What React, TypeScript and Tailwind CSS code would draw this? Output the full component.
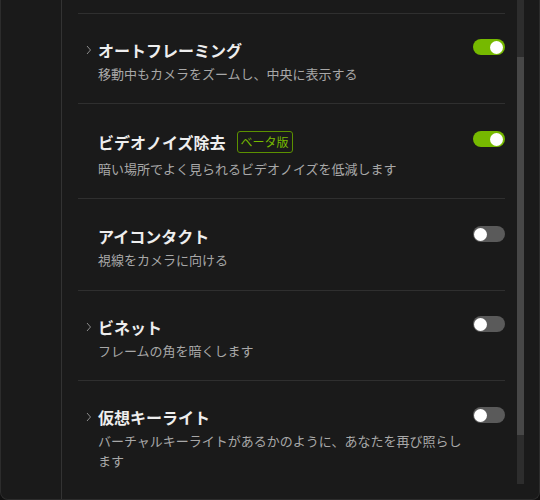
import React from "react";

interface Feature {
  id: string;
  title: string;
  description: string;
  enabled: boolean;
  expandable: boolean;
  beta?: boolean;
  rowClass: string;
  subClass: string;
  toggleClass: string;
}

const FEATURES: Feature[] = [
  {
    id: "autoframe",
    title: "オートフレーミング",
    description: "移動中もカメラをズームし、中央に表示する",
    enabled: true,
    expandable: true,
    rowClass: "pt-[24px] pb-[19px]",
    subClass: "mt-[2px]",
    toggleClass: "mt-[1px]",
  },
  {
    id: "noise",
    title: "ビデオノイズ除去",
    description: "暗い場所でよく見られるビデオノイズを低減します",
    enabled: true,
    expandable: false,
    beta: true,
    rowClass: "pt-[26px] pb-[19px]",
    subClass: "mt-[5px]",
    toggleClass: "mt-[1px]",
  },
  {
    id: "eye",
    title: "アイコンタクト",
    description: "視線をカメラに向ける",
    enabled: false,
    expandable: false,
    rowClass: "pt-[25px] pb-[20px]",
    subClass: "mt-[2px]",
    toggleClass: "mt-[2px]",
  },
  {
    id: "vignette",
    title: "ビネット",
    description: "フレームの角を暗くします",
    enabled: false,
    expandable: true,
    rowClass: "pt-[24px] pb-[19px]",
    subClass: "mt-[2px]",
    toggleClass: "mt-[1px]",
  },
  {
    id: "keylight",
    title: "仮想キーライト",
    description:
      "バーチャルキーライトがあるかのように、あなたを再び照らします",
    enabled: false,
    expandable: true,
    rowClass: "pt-[24px] pb-[19px]",
    subClass: "mt-[2px]",
    toggleClass: "mt-[2px]",
  },
];

function Toggle({ on }: { on: boolean }) {
  return (
    <div
      className={
        on
          ? "relative w-[32px] h-[16px] rounded-full bg-[#76b900] shrink-0"
          : "relative w-[32px] h-[16px] rounded-full bg-[#5a5a5a] shrink-0"
      }
    >
      <div
        className={
          on
            ? "absolute top-[1.5px] right-[2px] w-[13px] h-[13px] rounded-full bg-white"
            : "absolute top-[1.5px] left-[1px] w-[13px] h-[13px] rounded-full bg-white"
        }
      />
    </div>
  );
}

function Chevron() {
  return (
    <svg
      width="6"
      height="10"
      viewBox="0 0 6 10"
      fill="none"
      className="ml-[8px] mt-[7px]"
    >
      <path d="M1 1L4.5 5L1 9" stroke="#8c8c8c" strokeWidth="1" />
    </svg>
  );
}

export default function App() {
  return (
    <div
      className="w-[540px] h-[500px] bg-[#101010] overflow-hidden"
      style={{ fontFamily: '"Noto Sans CJK JP", "Noto Sans", sans-serif' }}
    >
      <div className="h-full flex bg-[#1a1a1a] border-x border-b border-[#2c2c2c] rounded-b-[8px] overflow-hidden">
        {/* Sidebar */}
        <div className="w-[61px] h-full border-r border-[#333333] shrink-0" />

        {/* Settings list */}
        <div className="flex-1 flex h-full">
          <div className="w-[427px] ml-4 pt-[13px]">
            {FEATURES.map((f) => (
              <div
                key={f.id}
                className={`flex items-start border-t border-[#2f2f2f] ${f.rowClass}`}
              >
                <div className="w-[20px] shrink-0">
                  {f.expandable && <Chevron />}
                </div>
                <div className="flex-1 min-w-0 pr-[10px]">
                  <div className="flex items-center h-[24px]">
                    <span className="text-[16px] leading-[24px] font-bold text-[#eeeeee]">
                      {f.title}
                    </span>
                    {f.beta && (
                      <span className="ml-[11px] h-[22px] px-[3px] border border-[#5c9100] rounded-[3px] text-[12px] leading-[20px] text-[#76b900]">
                        ベータ版
                      </span>
                    )}
                  </div>
                  <p
                    className={`text-[13px] leading-[20px] text-[#a8a8a8] ${f.subClass}`}
                  >
                    {f.description}
                  </p>
                </div>
                <div className={f.toggleClass}>
                  <Toggle on={f.enabled} />
                </div>
              </div>
            ))}
          </div>

          {/* Scrollbar */}
          <div className="ml-[12px] w-[7px] h-[484px] bg-[#2d2d2d] pt-[57px] shrink-0">
            <div className="h-[378px] bg-[#474747]" />
          </div>
        </div>
      </div>
    </div>
  );
}
